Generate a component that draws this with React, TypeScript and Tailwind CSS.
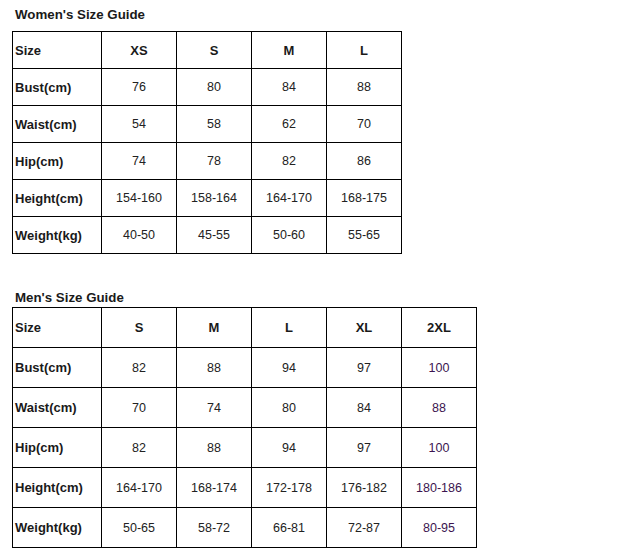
const font = { fontFamily: '"Liberation Sans", Arial, sans-serif' }

type Guide = {
  title: string
  sizes: string[]
  rows: { label: string; values: string[] }[]
  rowHeight: 'h-[37px]' | 'h-[40px]'
}

const women: Guide = {
  title: "Women's Size Guide",
  sizes: ['XS', 'S', 'M', 'L'],
  rowHeight: 'h-[37px]',
  rows: [
    { label: 'Bust(cm)', values: ['76', '80', '84', '88'] },
    { label: 'Waist(cm)', values: ['54', '58', '62', '70'] },
    { label: 'Hip(cm)', values: ['74', '78', '82', '86'] },
    { label: 'Height(cm)', values: ['154-160', '158-164', '164-170', '168-175'] },
    { label: 'Weight(kg)', values: ['40-50', '45-55', '50-60', '55-65'] },
  ],
}

const men: Guide = {
  title: "Men's Size Guide",
  sizes: ['S', 'M', 'L', 'XL', '2XL'],
  rowHeight: 'h-[40px]',
  rows: [
    { label: 'Bust(cm)', values: ['82', '88', '94', '97', '100'] },
    { label: 'Waist(cm)', values: ['70', '74', '80', '84', '88'] },
    { label: 'Hip(cm)', values: ['82', '88', '94', '97', '100'] },
    { label: 'Height(cm)', values: ['164-170', '168-174', '172-178', '176-182', '180-186'] },
    { label: 'Weight(kg)', values: ['50-65', '58-72', '66-81', '72-87', '80-95'] },
  ],
}

function SizeTable({ guide }: { guide: Guide }) {
  const cols = guide.sizes.length === 4
    ? 'grid-cols-[89px_75px_75px_75px_75px]'
    : 'grid-cols-[89px_75px_75px_75px_75px_75px]'
  const cell = `${guide.rowHeight} border-r border-b border-black flex items-center pt-[1px]`

  return (
    <div className={`grid ${cols} w-max border-l border-t border-black`}>
      <div className={`${cell} pl-[2px] text-[13px] font-bold text-[#1a1a1a]`}>Size</div>
      {guide.sizes.map((s) => (
        <div key={s} className={`${cell} justify-center text-[13px] font-bold text-[#1a1a1a]`}>
          {s}
        </div>
      ))}
      {guide.rows.map((row) => (
        <div key={row.label} className="contents">
          <div className={`${cell} pl-[2px] text-[13px] font-bold text-[#1a1a1a]`}>{row.label}</div>
          {row.values.map((v, i) => (
            <div
              key={i}
              className={`${cell} justify-center text-[12.5px] ${
                i === 4 ? 'text-[#3c1550]' : 'text-[#222]'
              }`}
            >
              {v}
            </div>
          ))}
        </div>
      ))}
    </div>
  )
}

export default function App() {
  return (
    <div className="min-h-[553px] w-[642px] bg-white pl-[12px] pt-[7px]" style={font}>
      <h2 className="pl-[3px] text-[13.3px] font-bold leading-[16px] text-[#1a1a1a]">{women.title}</h2>
      <div className="mt-[8px]">
        <SizeTable guide={women} />
      </div>
      <h2 className="mt-[36px] pl-[3px] text-[13.3px] font-bold leading-[16px] text-[#1a1a1a]">{men.title}</h2>
      <div className="mt-[1px]">
        <SizeTable guide={men} />
      </div>
    </div>
  )
}
